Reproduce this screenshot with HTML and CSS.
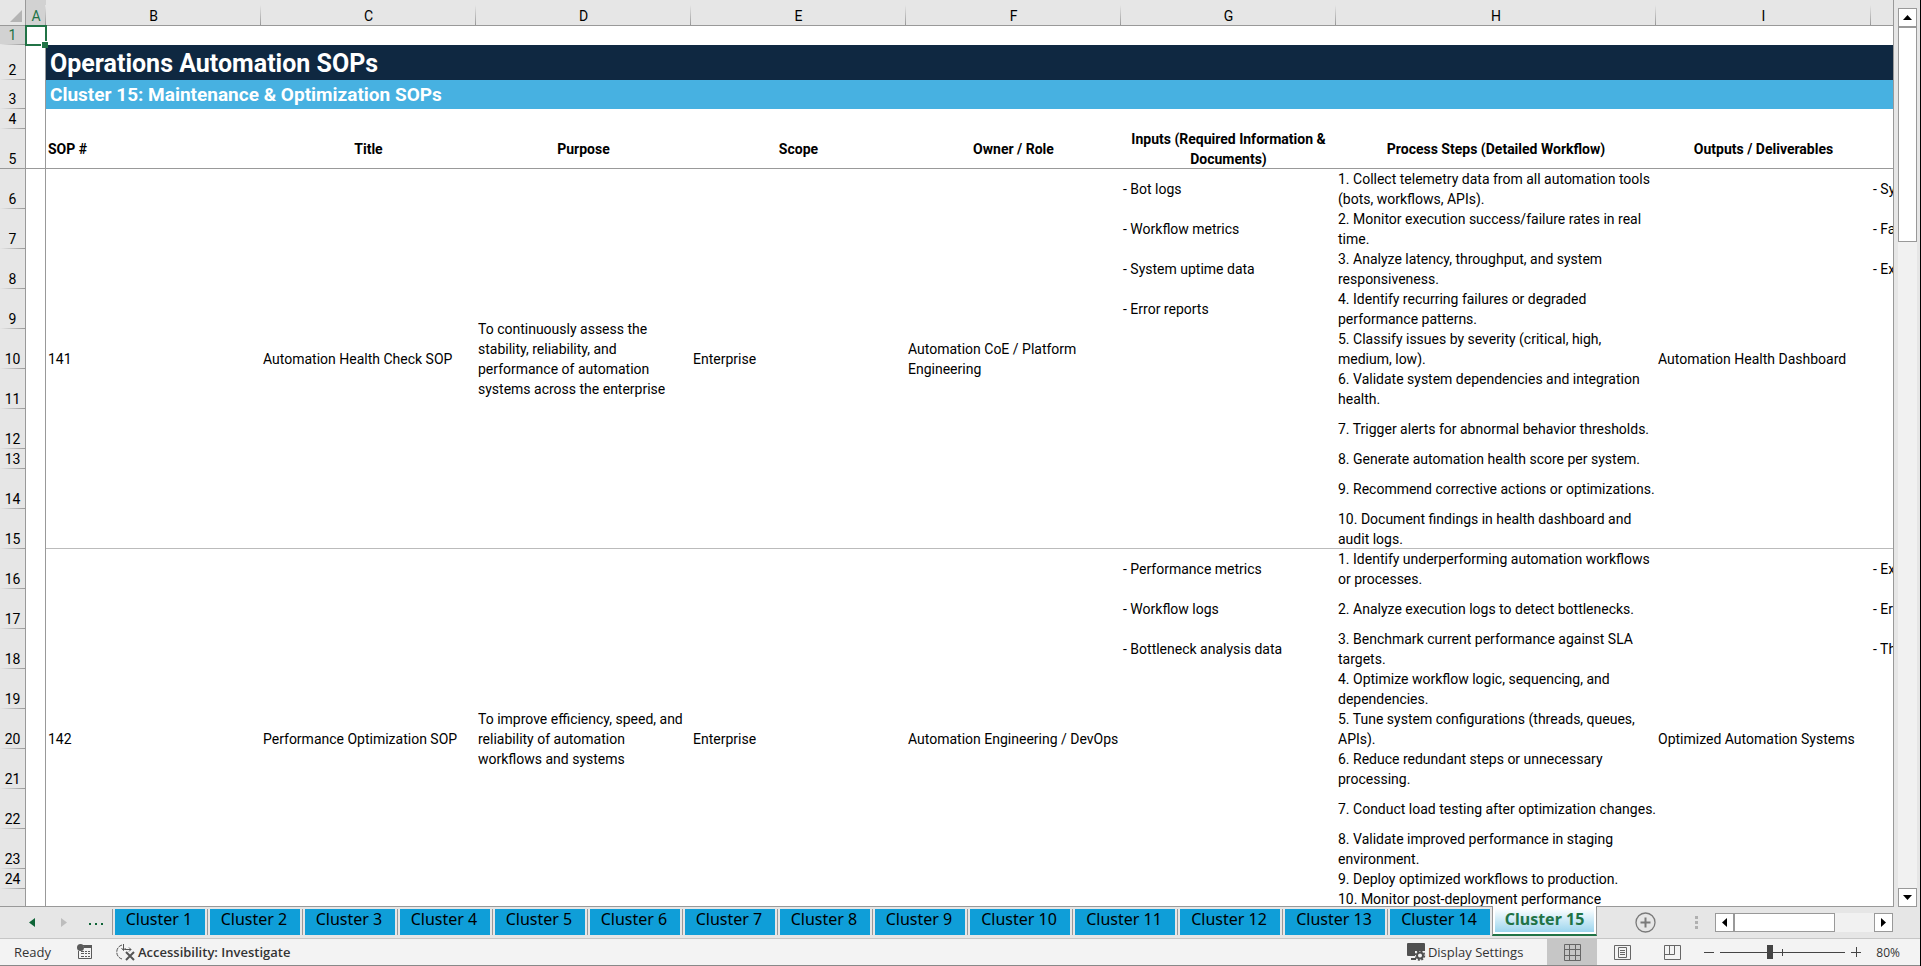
FILE: index.html
```
<!DOCTYPE html>
<html lang="en">

<head>
  <meta charset="UTF-8">
  <meta name="viewport" content="width=device-width, initial-scale=1.0">
  <title>Operations Automation SOPs</title>
  <link rel="stylesheet" href="styles.css">
</head>

<body>
  <main class="workbook">
    <div class="grid-view">
      <table class="sheet">
        <colgroup>
          <col class="col-num">
          <col class="col-a">
          <col class="col-std">
          <col class="col-std">
          <col class="col-std">
          <col class="col-std">
          <col class="col-std">
          <col class="col-std">
          <col class="col-wide">
          <col class="col-std">
          <col class="col-std">
        </colgroup>
        <thead>
          <tr class="letters">
            <th class="corner"><svg width="12" height="12" viewBox="0 0 12 12"><path d="M12 0v12H0z" fill="#b4b4b4"/></svg></th>
            <th class="active">A</th>
            <th>B</th>
            <th>C</th>
            <th>D</th>
            <th>E</th>
            <th>F</th>
            <th>G</th>
            <th>H</th>
            <th>I</th>
            <th></th>
          </tr>
        </thead>
        <tbody>
          <tr class="h19"><th class="active">1</th><td class="gutter selected"></td><td colspan="9"></td></tr>
          <tr class="h35"><th>2</th><td class="gutter"></td><td class="title" colspan="9">Operations Automation SOPs</td></tr>
          <tr class="h29"><th>3</th><td class="gutter"></td><td class="subtitle" colspan="9">Cluster 15: Maintenance &amp; Optimization SOPs</td></tr>
          <tr class="h20"><th>4</th><td class="gutter"></td><td colspan="9"></td></tr>
          <tr class="h40 headings">
            <th>5</th><td class="gutter"></td>
            <td class="first">SOP #</td>
            <td>Title</td>
            <td>Purpose</td>
            <td>Scope</td>
            <td>Owner / Role</td>
            <td>Inputs (Required Information &amp; Documents)</td>
            <td>Process Steps (Detailed Workflow)</td>
            <td>Outputs / Deliverables</td>
            <td></td>
          </tr>

          <!-- SOP 141 -->
          <tr class="h40">
            <th>6</th><td class="gutter"></td>
            <td class="end" rowspan="10">141</td>
            <td class="end" rowspan="10">Automation Health Check SOP</td>
            <td class="end" rowspan="10">To continuously assess the stability, reliability, and performance of automation systems across the enterprise</td>
            <td class="end" rowspan="10">Enterprise</td>
            <td class="end" rowspan="10">Automation CoE / Platform Engineering</td>
            <td>- Bot logs</td>
            <td>1. Collect telemetry data from all automation tools (bots, workflows, APIs).</td>
            <td class="end" rowspan="10">Automation Health Dashboard</td>
            <td>- System health</td>
          </tr>
          <tr class="h40"><th>7</th><td class="gutter"></td><td>- Workflow metrics</td><td>2. Monitor execution success/failure rates in real time.</td><td>- Failure rate</td></tr>
          <tr class="h40"><th>8</th><td class="gutter"></td><td>- System uptime data</td><td>3. Analyze latency, throughput, and system responsiveness.</td><td>- Execution time</td></tr>
          <tr class="h40"><th>9</th><td class="gutter"></td><td>- Error reports</td><td>4. Identify recurring failures or degraded performance patterns.</td><td></td></tr>
          <tr class="h40"><th>10</th><td class="gutter"></td><td></td><td>5. Classify issues by severity (critical, high, medium, low).</td><td></td></tr>
          <tr class="h40"><th>11</th><td class="gutter"></td><td></td><td>6. Validate system dependencies and integration health.</td><td></td></tr>
          <tr class="h40"><th>12</th><td class="gutter"></td><td></td><td class="one-line">7. Trigger alerts for abnormal behavior thresholds.</td><td></td></tr>
          <tr class="h20"><th>13</th><td class="gutter"></td><td></td><td class="one-line">8. Generate automation health score per system.</td><td></td></tr>
          <tr class="h40"><th>14</th><td class="gutter"></td><td></td><td class="one-line">9. Recommend corrective actions or optimizations.</td><td></td></tr>
          <tr class="h40"><th>15</th><td class="gutter"></td><td class="end"></td><td class="end">10. Document findings in health dashboard and audit logs.</td><td class="end"></td></tr>

          <!-- SOP 142 -->
          <tr class="h40">
            <th>16</th><td class="gutter"></td>
            <td class="end" rowspan="10">142</td>
            <td class="end" rowspan="10">Performance Optimization SOP</td>
            <td class="end" rowspan="10">To improve efficiency, speed, and reliability of automation workflows and systems</td>
            <td class="end" rowspan="10">Enterprise</td>
            <td class="end" rowspan="10">Automation Engineering / DevOps</td>
            <td>- Performance metrics</td>
            <td>1. Identify underperforming automation workflows or processes.</td>
            <td class="end" rowspan="10">Optimized Automation Systems</td>
            <td>- Execution time</td>
          </tr>
          <tr class="h40"><th>17</th><td class="gutter"></td><td>- Workflow logs</td><td class="one-line">2. Analyze execution logs to detect bottlenecks.</td><td>- Error rate</td></tr>
          <tr class="h40"><th>18</th><td class="gutter"></td><td>- Bottleneck analysis data</td><td>3. Benchmark current performance against SLA targets.</td><td>- Throughput</td></tr>
          <tr class="h40"><th>19</th><td class="gutter"></td><td></td><td>4. Optimize workflow logic, sequencing, and dependencies.</td><td></td></tr>
          <tr class="h40"><th>20</th><td class="gutter"></td><td></td><td>5. Tune system configurations (threads, queues, APIs).</td><td></td></tr>
          <tr class="h40"><th>21</th><td class="gutter"></td><td></td><td>6. Reduce redundant steps or unnecessary processing.</td><td></td></tr>
          <tr class="h40"><th>22</th><td class="gutter"></td><td></td><td class="one-line">7. Conduct load testing after optimization changes.</td><td></td></tr>
          <tr class="h40"><th>23</th><td class="gutter"></td><td></td><td>8. Validate improved performance in staging environment.</td><td></td></tr>
          <tr class="h20"><th>24</th><td class="gutter"></td><td></td><td class="one-line">9. Deploy optimized workflows to production.</td><td></td></tr>
          <tr class="h40"><th></th><td class="gutter"></td><td class="end"></td><td class="end top">10. Monitor post-deployment performance</td><td class="end"></td></tr>
        </tbody>
      </table>
    </div>
    <div class="vscroll">
      <button class="arrow" aria-label="Scroll up"><svg width="9" height="5" viewBox="0 0 9 5"><path d="M0 5L4.500 0 9 5z"/></svg></button>
      <div class="vthumb"></div>
      <button class="arrow down" aria-label="Scroll down"><svg width="9" height="5" viewBox="0 0 9 5"><path d="M0 0L4.500 5 9 0z"/></svg></button>
    </div>
  </main>

  <nav class="tabbar">
    <button class="nav prev" aria-label="Previous sheets"><svg width="6" height="9" viewBox="0 0 6 9"><path d="M6 0v9L0 4.500z"/></svg></button>
    <button class="nav next" aria-label="Next sheets"><svg width="6" height="9" viewBox="0 0 6 9"><path d="M0 0v9l6-4.500z"/></svg></button>
    <button class="nav more" aria-label="More sheets"><svg width="14" height="3" viewBox="0 0 14 3"><path d="M0 0h2v2H0zM6 0h2v2H6zM12 0h2v2h-2z"/></svg></button>
    <div class="tabs">
      <button class="tab">Cluster 1</button>
      <button class="tab">Cluster 2</button>
      <button class="tab">Cluster 3</button>
      <button class="tab">Cluster 4</button>
      <button class="tab">Cluster 5</button>
      <button class="tab">Cluster 6</button>
      <button class="tab">Cluster 7</button>
      <button class="tab">Cluster 8</button>
      <button class="tab">Cluster 9</button>
      <button class="tab long">Cluster 10</button>
      <button class="tab long">Cluster 11</button>
      <button class="tab long">Cluster 12</button>
      <button class="tab long">Cluster 13</button>
      <button class="tab long">Cluster 14</button>
      <button class="tab long current">Cluster 15</button>
    </div>
    <button class="add" aria-label="New sheet"><svg width="21" height="21" viewBox="0 0 21 21" fill="none" stroke="#7a7a7a"><circle cx="10.500" cy="10.500" r="9.500" stroke-width="1.300"/><path d="M10.500 5.500v10M5.500 10.500h10" stroke-width="2"/></svg></button>
    <svg class="grip" width="3" height="13" viewBox="0 0 3 13"><path d="M0 0h3v3H0zM0 5h3v3H0zM0 10h3v3H0z" fill="#b0b0b0"/></svg>
    <div class="hscroll">
      <button class="arrow" aria-label="Scroll left"><svg width="5" height="9" viewBox="0 0 5 9"><path d="M5 0v9L0 4.500z"/></svg></button>
      <div class="hthumb"></div>
      <button class="arrow right" aria-label="Scroll right"><svg width="5" height="9" viewBox="0 0 5 9"><path d="M0 0v9l5-4.500z"/></svg></button>
    </div>
  </nav>

  <footer class="status">
    <span class="ready">Ready</span>
    <button class="macro" aria-label="Record macro"><svg width="16" height="16" viewBox="0 0 16 16"><path d="M6 1.500h8.500v13h-13V7" fill="none" stroke="#5a5a5a"/><path d="M7 1h8v3H7z" fill="#5a5a5a"/><circle cx="3.500" cy="3.500" r="3.500" fill="#5a5a5a"/><path d="M4 7.500h3M8 7.500h2M11 7.500h2M4 9.500h3M8 9.500h2M11 9.500h2M4 12.500h3M8 12.500h2M11 12.500h2" stroke="#5a5a5a"/></svg></button>
    <button class="access"><svg width="20" height="18" viewBox="0 0 20 18" fill="none" stroke="#555"><path d="M6 2C-1 4-1 14 6 16" stroke-dasharray="4 1"/><path d="M7.500 1v6M5.500 5l2 2.500 2-2.500M9 6.500h6M13 4.500l2 2-2 2"/><path d="M10 9l8 8M18 9l-8 8" stroke-width="2"/></svg>Accessibility: Investigate</button>
    <button class="display"><svg width="19" height="18" viewBox="0 0 19 18"><path d="M1 0h16q1 0 1 1v7H8v5H1q-1 0-1-1V1q0-1 1-1zM4 15h5v2H4z" fill="#505050"/><circle cx="13" cy="12.500" r="3" fill="none" stroke="#505050" stroke-width="2"/><circle cx="13" cy="12.500" r="4.500" fill="none" stroke="#505050" stroke-width="1.500" stroke-dasharray="2 1.530"/></svg>Display Settings</button>
    <button class="view on" aria-label="Normal"><svg width="17" height="17" viewBox="0 0 17 17" fill="none" stroke="#666"><path d="M.5.5h16v16H.5zM5.500.5v16M11.500.5v16M.5 5.500h16M.5 11.500h16"/></svg></button>
    <button class="view" aria-label="Page layout"><svg width="17" height="15" viewBox="0 0 17 15" fill="none" stroke="#666"><path d="M.5.5h16v14H.5zM4.500 2.500h8v10h-8zM6 5.500h5M6 7.500h5M6 9.500h5"/></svg></button>
    <button class="view" aria-label="Page break preview"><svg width="17" height="15" viewBox="0 0 17 15" fill="none" stroke="#666"><path d="M.5.5h16v14H.5zM5.500.5v9M.5 9.500h10V.5"/></svg></button>
    <div class="zoom">
      <button aria-label="Zoom out"><svg width="10" height="10" viewBox="0 0 10 10"><path d="M0 5.500h10" stroke="#444"/></svg></button>
      <input type="range" min="0" max="100" value="39" aria-label="Zoom">
      <button aria-label="Zoom in"><svg width="10" height="10" viewBox="0 0 10 10"><path d="M0 5.500h10M5.500 0v10" stroke="#444"/></svg></button>
      <span class="percent">80%</span>
    </div>
  </footer>
</body>

</html>
```
FILE: styles.css
```
* {
  box-sizing: border-box;
}
body {
  margin: 0;
  height: 100vh;
  display: flex;
  flex-direction: column;
  overflow: hidden;
  background: #e6e6e6;
  border-right: 1px solid #000;
  font-family: Roboto, "Liberation Sans", sans-serif;
  font-size: 14px;
  color: #000;
}
button {
  margin: 0;
  padding: 0;
  border: none;
  background: none;
  font: inherit;
  color: inherit;
}
svg {
  display: block;
}

/* grid */
.workbook {
  flex: 1;
  min-height: 0;
  display: flex;
}
.grid-view {
  flex: 1;
  min-width: 0;
  overflow: hidden;
  border-right: 1px solid #999;
  border-bottom: 1px solid #999;
  background: #fff;
}
.sheet {
  table-layout: fixed;
  border-collapse: separate;
  border-spacing: 0;
  width: 2086px;
}
.col-num {
  width: 26px;
}
.col-a {
  width: 20px;
}
.col-std {
  width: 215px;
}
.col-wide {
  width: 320px;
}
.sheet td {
  padding: 0 2px;
  line-height: 20px;
  vertical-align: middle;
}
.sheet th {
  background: #e6e6e6;
  padding: 0;
  font-weight: 400;
}
.letters th {
  height: 26px;
  padding-top: 6px;
  line-height: 17px;
  vertical-align: bottom;
  border-bottom: 1px solid #999;
  background: linear-gradient(#e6e6e6, #999) right bottom / 1px 20px no-repeat #e6e6e6;
}
.letters .corner {
  background: #e6e6e6;
  border-right: 1px solid #999;
}
.corner svg {
  margin: 0 0 3px 10px;
}
.sheet tbody th {
  vertical-align: bottom;
  line-height: 19px;
  border-right: 1px solid #999;
  background: linear-gradient(90deg, #e6e6e6, #999) left bottom / 100% 1px no-repeat #e6e6e6;
}
.sheet th.active {
  background-color: #d2d2d2;
  color: #217346;
}
.h19 {
  height: 19px;
}
.h20 {
  height: 20px;
}
.h29 {
  height: 29px;
}
.h35 {
  height: 35px;
}
.h40 {
  height: 40px;
}
.sheet .gutter {
  padding: 0;
  border-right: 1px solid #999;
}
.sheet .selected {
  position: relative;
  outline: 2px solid #217346;
  outline-offset: -1px;
}
/* fill handle */
.selected::after {
  content: "";
  position: absolute;
  right: -3px;
  bottom: -3px;
  width: 6px;
  height: 6px;
  background: #217346;
  border: solid #fff;
  border-width: 1px 0 0 1px;
}
.sheet .title {
  background: #0f2841;
  color: #fff;
  font-size: 25px;
  font-weight: 700;
  line-height: 32px;
  padding: 3px 4px 0;
}
.sheet .subtitle {
  background: #47b1e1;
  color: #fff;
  font-size: 19px;
  font-weight: 700;
  line-height: 28px;
  padding: 0 4px;
}
.headings td {
  font-weight: 700;
  text-align: center;
}
.headings td,
.headings th {
  box-shadow: inset 0 -1px #999;
}
.headings .first {
  text-align: left;
}
.sheet .end {
  box-shadow: inset 0 -1px #bbb;
}
.sheet .top {
  vertical-align: top;
}
.one-line {
  white-space: nowrap;
}

/* scrollbars */
.vscroll {
  width: 26px;
  padding: 8px 3px 0 4px;
  display: flex;
  flex-direction: column;
  background: linear-gradient(#f1f1f1, #f1f1f1) 4px 8px / 19px 100% no-repeat;
}
.arrow {
  display: flex;
  align-items: center;
  justify-content: center;
  flex: none;
  width: 19px;
  height: 19px;
  border: 1px solid #999;
  background: #fff;
}
.vthumb {
  height: 215px;
  border: 1px solid #999;
  background: #fff;
}
.down {
  margin-top: auto;
}

/* sheet tabs */
.tabbar {
  flex: none;
  height: 32px;
  display: flex;
  align-items: center;
  border-bottom: 1px solid #c6c6c6;
  font-family: "Noto Sans", "Open Sans", sans-serif;
  font-size: 16px;
}
.nav {
  width: 32px;
  display: flex;
  justify-content: center;
  fill: #0e6437;
}
.prev {
  margin-left: 16px;
}
.next {
  fill: #bdbdbd;
}
.more {
  padding-top: 4px;
}
.tabs {
  display: flex;
  align-self: stretch;
}
.tab {
  width: 95px;
  height: 26px;
  margin-top: 2px;
  padding-bottom: 5px;
  border-left: 1px solid #999;
  border-right: 2px solid #e6e6e6;
  background: #0f9ed8;
  box-shadow: inset 2px 0 #e6e6e6;
  line-height: 21px;
}
.tab.long {
  width: 105px;
}
.tab.current {
  height: 30px;
  margin-top: -1px;
  padding: 0 0 2px;
  border-right: 1px solid #999;
  border-bottom: 2px solid #217346;
  background: linear-gradient(#fff, #9cd5ee) center 2px / 99px 24px no-repeat #fff;
  box-shadow: none;
  color: #217346;
  font-weight: 700;
}
.add {
  margin-left: 38px;
}
.grip {
  margin-left: auto;
}
.hscroll {
  display: flex;
  width: 178px;
  margin: 0 27px 0 17px;
  background: #f1f1f1;
}
.hthumb {
  width: 101px;
  border: 1px solid #999;
  background: #fff;
}
.right {
  margin-left: auto;
}

/* status bar */
.status {
  flex: none;
  height: 27px;
  display: flex;
  align-items: center;
  border-bottom: 1px solid #888;
  background: #f3f3f3;
  font-family: "Open Sans", "Noto Sans", sans-serif;
  font-size: 13px;
  color: #333;
}
.ready {
  width: 63px;
  padding-left: 14px;
}
.macro {
  margin: 0 23px 0 14px;
}
.access {
  display: flex;
  align-items: center;
  gap: 2px;
  font-weight: 600;
}
.display {
  display: flex;
  align-items: center;
  gap: 2px;
  margin: 0 24px 0 auto;
}
.view {
  width: 50px;
  height: 26px;
  display: flex;
  align-items: center;
  justify-content: center;
}
.view.on {
  background: #c6c6c6;
}
.zoom {
  display: flex;
  align-items: center;
  gap: 6px;
  margin: 0 20px 0 7px;
}
.zoom input {
  appearance: none;
  width: 125px;
  height: 16px;
  margin: 0;
  background: linear-gradient(#444, #444) center / 100% 1px no-repeat, linear-gradient(#444, #444) center / 1px 7px no-repeat;
}
.zoom input::-webkit-slider-thumb {
  appearance: none;
  width: 6px;
  height: 14px;
  background: #444;
}
.percent {
  margin-left: 9px;
  font-size: 12px;
}
```
